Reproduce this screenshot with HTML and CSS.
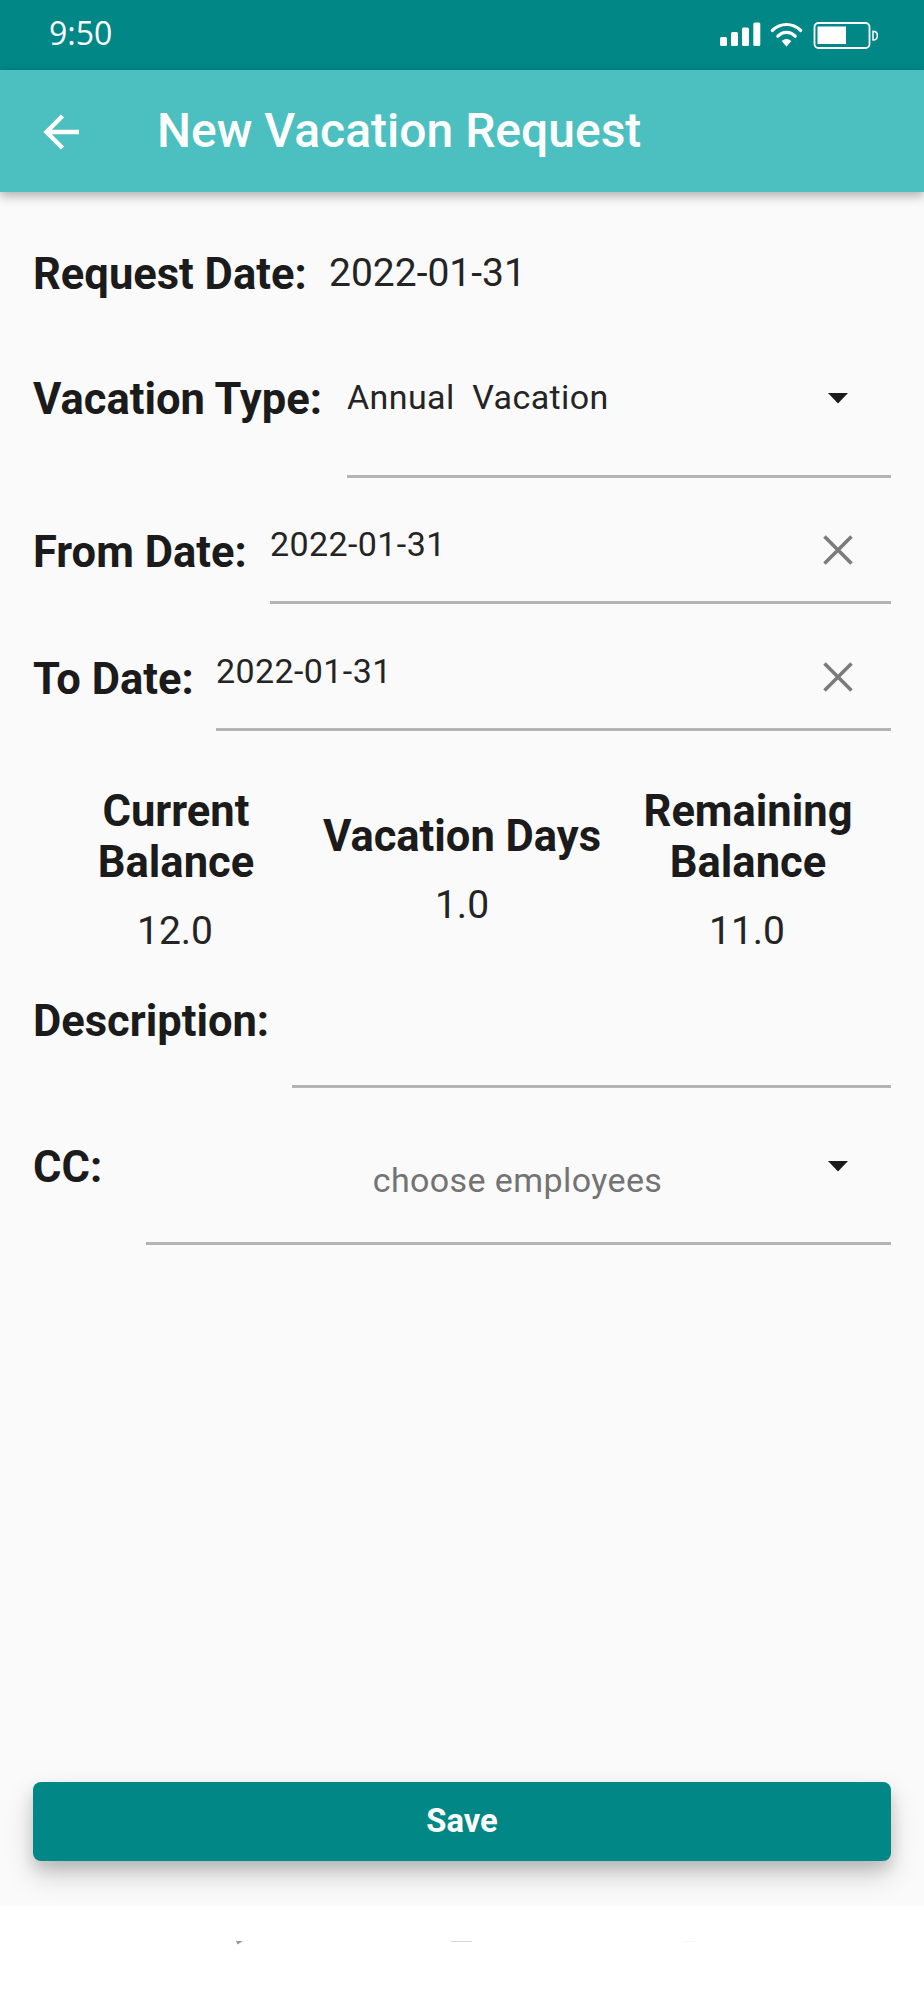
FILE: index.html
```html
<!DOCTYPE html>
<html lang="en">
<head>
<meta charset="utf-8">
<title>New Vacation Request</title>
<link rel="stylesheet" href="styles.css">
</head>
<body>
<div class="screen">
  <div class="status">
    <span class="clock">9:50</span>
    <svg class="indicators" width="160" height="30" viewBox="0 0 160 30" fill="#fff">
      <rect x="0" y="15" width="7" height="9" rx="1.5"/>
      <rect x="11" y="10" width="7" height="14" rx="1.5"/>
      <rect x="22" y="5.500" width="7" height="18.500" rx="1.500"/>
      <rect x="33.300" y="0.500" width="7" height="23.500" rx="1.500"/>
      <g fill="none" stroke="#fff" stroke-width="3.200" stroke-linecap="round">
        <path d="M52.300 8.500C60.500 0.500 72.500 0.500 80.700 8.500"/>
        <path d="M57.800 14.200C63 9 70 9 75.200 14.200"/>
      </g>
      <path d="M61.700 19C64.500 16.300 68.500 16.300 71.300 19L66.500 24.800Z"/>
      <rect x="94.500" y="1" width="55" height="25" rx="4" fill="none" stroke="#fff" stroke-width="1.800"/>
      <rect x="97.500" y="4.500" width="28.500" height="17.500"/>
      <path d="M153 9.300C158.800 9.300 158.800 18 153 18Z" fill="none" stroke="#fff" stroke-width="1.500"/>
    </svg>
  </div>
  <header class="appbar">
    <svg class="back" width="36" height="36" viewBox="0 0 36 36" fill="none" stroke="#fff" stroke-width="4.400">
      <path d="M36 18H4M19.500 2L3.500 18L19.500 34"/>
    </svg>
    <h1 class="title">New Vacation Request</h1>
  </header>
  <main class="form">
    <div class="row request">
      <span class="label">Request Date:</span>
      <span class="plain">2022-01-31</span>
    </div>
    <div class="row type">
      <span class="label">Vacation Type:</span>
      <div class="field"><span class="value">Annual&nbsp; Vacation</span>
        <svg class="caret" width="20" height="11" viewBox="0 0 20 11"><path d="M0 0H20L10 10.500Z" fill="#1b1b1b"/></svg></div>
    </div>
    <div class="row from">
      <span class="label">From Date:</span>
      <div class="field"><span class="value">2022-01-31</span>
        <svg class="clear" width="30" height="30" viewBox="0 0 30 30"><path d="M1.500 1.500L28.500 28.500M28.500 1.500L1.500 28.500" stroke="#7b7b7b" stroke-width="3.600"/></svg></div>
    </div>
    <div class="row to">
      <span class="label">To Date:</span>
      <div class="field"><span class="value">2022-01-31</span>
        <svg class="clear" width="30" height="30" viewBox="0 0 30 30"><path d="M1.500 1.500L28.500 28.500M28.500 1.500L1.500 28.500" stroke="#7b7b7b" stroke-width="3.600"/></svg></div>
    </div>
    <div class="balances">
      <div class="balance"><b class="heading">Current<br>Balance</b><span class="plain">12.0</span></div>
      <div class="balance"><b class="heading">Vacation Days</b><span class="plain">1.0</span></div>
      <div class="balance"><b class="heading">Remaining<br>Balance</b><span class="plain">11.0</span></div>
    </div>
    <div class="row description">
      <span class="label">Description:</span>
      <div class="field"></div>
    </div>
    <div class="row cc">
      <span class="label">CC:</span>
      <div class="field"><span class="value hint">choose employees</span>
        <svg class="caret" width="20" height="11" viewBox="0 0 20 11"><path d="M0 0H20L10 10.500Z" fill="#1b1b1b"/></svg></div>
    </div>
    <button class="save">Save</button>
  </main>
  <footer class="navbar">
    <svg width="924" height="94" viewBox="0 0 924 94">
      <path d="M236 35H243L237.500 38.500Z" fill="#999"/>
      <path d="M451 35.500H472" stroke="#d8d8d8" stroke-width="1"/>
      <path d="M682 35.500H697" stroke="#f8f8f8" stroke-width="1"/>
    </svg>
  </footer>
</div>
</body>
</html>
```
FILE: styles.css
```css
* { box-sizing: border-box; }
body { margin: 0; background: #fff; font-family: Roboto, "Liberation Sans", sans-serif; color: #1b1b1b; }
.screen { width: 924px; height: 2000px; display: flex; flex-direction: column; overflow: hidden; background: #fafafa; }

.status { height: 70px; flex: none; background: #008786; display: flex; justify-content: space-between; padding: 0 44px 0 49px; }
.clock { font: 32px/44px "Open Sans", "Noto Sans", sans-serif; color: #fff; padding-top: 11px; }
.indicators { margin-top: 22px; }

.appbar { height: 122px; flex: none; display: flex; background: #4cc0c0; padding-left: 43px; position: relative; box-shadow: 0 4px 10px rgba(0, 0, 0, .3); }
.back { margin-top: 43.5px; }
.title { margin: 33px 0 0 78px; font-size: 48px; line-height: 56px; font-weight: 500; color: #fff; white-space: nowrap; }

.form { height: 1714px; flex: none; padding: 0 33px; display: flex; flex-direction: column; overflow: hidden; }
.row { display: grid; flex: none; }
.label { font-size: 43.5px; line-height: 52px; font-weight: 700; white-space: nowrap; }
.plain { font-size: 39px; line-height: 46px; white-space: nowrap; color: #242424; }
.field { display: flex; justify-content: space-between; align-items: flex-start; border-bottom: 3px solid #b4b4b4; }
.value { font-size: 34px; line-height: 40px; letter-spacing: .4px; white-space: nowrap; color: #242424; }
.value.hint { flex: 1; text-align: center; color: #737373; }
.caret, .clear { flex: none; }

.request { height: 138px; grid-template-columns: 296px 1fr; padding-top: 56px; }
.request .label { padding-top: 1px; }
.request .plain { padding-top: 2px; }
.type { height: 148px; grid-template-columns: 314px 1fr; }
.type .label { padding-top: 44px; }
.type .value { padding-top: 47px; }
.type .caret { margin: 63px 43px 0 0; }
.from { height: 126px; grid-template-columns: 237px 1fr; }
.from .label { padding-top: 49px; }
.to .label { padding-top: 50px; }
.from .value { padding-top: 46px; }
.to .value { padding-top: 47px; }
.clear { margin: 57px 38px 0 0; }
.to .clear { margin-top: 58px; }
.to { height: 127px; grid-template-columns: 183px 1fr; }

.balances { display: grid; grid-template-columns: repeat(3, 1fr); align-items: center; flex: none; height: 169px; margin-top: 54px; }
.balance { display: flex; flex-direction: column; align-items: center; gap: 20px; text-align: center; }
.heading { font-size: 43.5px; line-height: 51px; white-space: nowrap; }
.balance .plain { padding-right: 2px; }
.balance:nth-child(2) .plain { padding-right: 0; }

.description { height: 128px; margin-top: 6px; grid-template-columns: 259px 1fr; }
.description .label { padding-top: 36px; }
.cc { height: 157px; grid-template-columns: 113px 1fr; }
.cc .label { padding-top: 54px; }
.cc .value { padding: 72px 0 0 61px; }
.cc .caret { margin: 73px 43px 0 0; }

.save { margin-top: auto; margin-bottom: 45px; height: 79px; flex: none; border: 0; border-radius: 8px; background: #008786; color: #fff; font: 700 32.7px/40px Roboto, sans-serif; padding: 0 0 1px; box-shadow: 0 14px 28px rgba(0, 0, 0, .18), 0 8px 14px rgba(0, 0, 0, .12); }
.navbar { flex: 1; background: #fff; }
.navbar svg { display: block; }
```
